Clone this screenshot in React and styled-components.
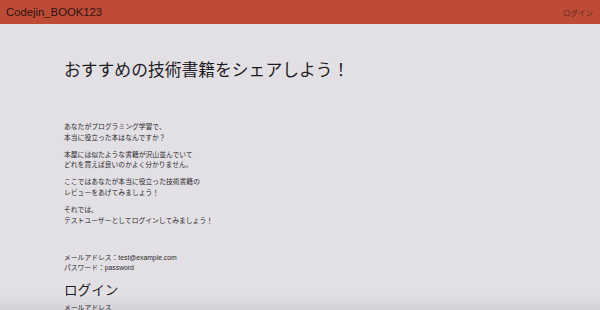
import styled, { createGlobalStyle } from "styled-components";

const GlobalStyle = createGlobalStyle`
  html, body {
    margin: 0;
    padding: 0;
    background: #e3e0e5;
    font-family: "Liberation Sans", "Noto Sans CJK JP", sans-serif;
    color: #2c2a2d;
    overflow: hidden;
  }
`;

const Header = styled.header`
  height: 24px;
  background: #be4b36;
  display: flex;
  align-items: center;
  justify-content: space-between;
  padding: 0 7px 0 6px;
`;

const Brand = styled.div`
  font-size: 11.3px;
  color: #2b1410;
`;

const NavLink = styled.a`
  font-size: 7.5px;
  color: #5a2a20;
  text-decoration: none;
`;

const Main = styled.main`
  padding: 0 64px;
`;

const Title = styled.h1`
  margin: 35px 0 0;
  font-size: 16.8px;
  line-height: 24px;
  font-weight: 400;
  color: #1e1c1f;
`;

const Intro = styled.section`
  margin-top: 39px;
  display: flex;
  flex-direction: column;
  gap: 6.5px;
`;

const Para = styled.p`
  margin: 0;
  font-size: 6.8px;
  line-height: 10.6px;
`;

const Credentials = styled(Para)`
  margin-top: 27px;
  line-height: 10px;
`;

const SubTitle = styled.h2`
  margin: 9px 0 0;
  font-size: 13.6px;
  line-height: 18px;
  font-weight: 400;
  color: #1e1c1f;
`;

const Label = styled.label`
  display: block;
  margin-top: 3px;
  font-size: 6.8px;
  line-height: 10px;
`;

const Shade = styled.div`
  position: fixed;
  left: 0;
  right: 0;
  bottom: 0;
  height: 16px;
  pointer-events: none;
  background: linear-gradient(to bottom, rgba(0, 0, 0, 0), rgba(0, 0, 0, 0.06));
`;

const App = () => {
  return (
    <>
      <GlobalStyle />
      <Header>
        <Brand>Codejin_BOOK123</Brand>
        <NavLink href="#">ログイン</NavLink>
      </Header>
      <Main>
        <Title>おすすめの技術書籍をシェアしよう！</Title>
        <Intro>
          <Para>
            あなたがプログラミング学習で、
            <br />
            本当に役立った本はなんですか？
          </Para>
          <Para>
            本屋には似たような書籍が沢山並んでいて
            <br />
            どれを買えば良いのかよく分かりません。
          </Para>
          <Para>
            ここではあなたが本当に役立った技術書籍の
            <br />
            レビューをあげてみましょう！
          </Para>
          <Para>
            それでは、
            <br />
            テストユーザーとしてログインしてみましょう！
          </Para>
        </Intro>
        <Credentials>
          メールアドレス：test@example.com
          <br />
          パスワード：password
        </Credentials>
        <SubTitle>ログイン</SubTitle>
        <Label>メールアドレス</Label>
      </Main>
      <Shade />
    </>
  );
};

export default App;
